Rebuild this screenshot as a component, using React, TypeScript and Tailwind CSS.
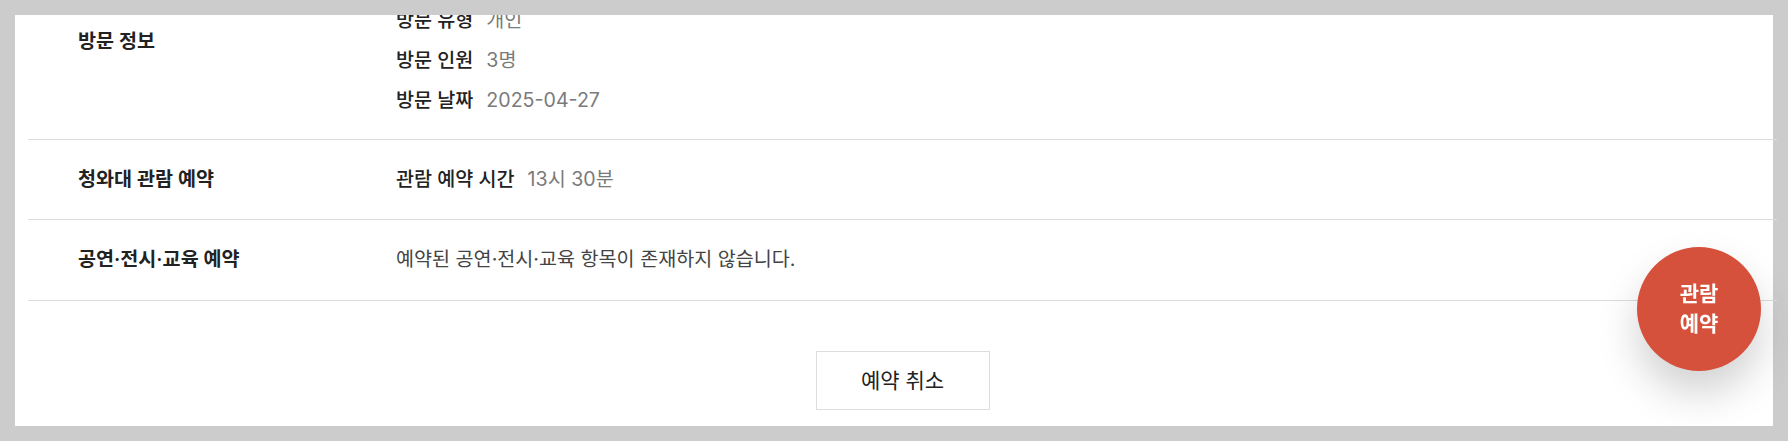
import React from "react";

const font = { fontFamily: 'Inter, "Noto Sans CJK KR", "Noto Sans", sans-serif' };

function InfoLine({ k, v }: { k: string; v: string }) {
  return (
    <div className="flex items-center h-[40px] gap-[13px]">
      <span className="font-medium text-[#222222]">{k}</span>
      <span className="text-[#7a7a7a]">{v}</span>
    </div>
  );
}

export default function App() {
  return (
    <div
      className="w-[1788px] h-[441px] overflow-hidden bg-[#cccccc] p-[15px] text-[19.6px]"
      style={font}
    >
      <div className="flex flex-col h-[411px] w-[1758px] bg-white overflow-y-clip overflow-x-visible">
        <div className="ml-[13px] mr-[-4px] mt-[-14px] flex flex-col">
          {/* Row 1 */}
          <div className="flex pl-[50px] pb-[18px] border-b border-[#dcdcdc]">
            <div className="w-[318px] mt-[21px] h-[40px] flex items-center font-semibold text-[#222222]">
              방문 정보
            </div>
            <div className="flex flex-col">
              <InfoLine k="방문 유형" v="개인" />
              <InfoLine k="방문 인원" v="3명" />
              <InfoLine k="방문 날짜" v="2025-04-27" />
            </div>
          </div>
          {/* Row 2 */}
          <div className="flex items-center pl-[50px] h-[80px] border-b border-[#dcdcdc]">
            <div className="w-[318px] font-semibold text-[#222222]">청와대 관람 예약</div>
            <div className="flex items-center gap-[13px]">
              <span className="font-medium text-[#222222]">관람 예약 시간</span>
              <span className="text-[#7a7a7a]">13시 30분</span>
            </div>
          </div>
          {/* Row 3 */}
          <div className="flex items-center pl-[50px] h-[81px] border-b border-[#dcdcdc]">
            <div className="w-[318px] font-semibold text-[#222222]">공연·전시·교육 예약</div>
            <div className="text-[#444444]">예약된 공연·전시·교육 항목이 존재하지 않습니다.</div>
          </div>
          {/* Button */}
          <div className="flex justify-center pt-[50px]">
            <button className="w-[174px] h-[59px] border border-[#dddddd] bg-white text-[#222222] text-[21px]">
              예약 취소
            </button>
          </div>
        </div>
      </div>
      {/* Floating button */}
      <div className="fixed right-[27px] top-[247px] w-[124px] h-[124px] rounded-full bg-[#d5513b] text-white font-bold text-[21px] leading-[30px] flex flex-col items-center justify-center shadow-[0_22px_40px_rgba(0,0,0,0.18)]">
        <span>관람</span>
        <span>예약</span>
      </div>
    </div>
  );
}
